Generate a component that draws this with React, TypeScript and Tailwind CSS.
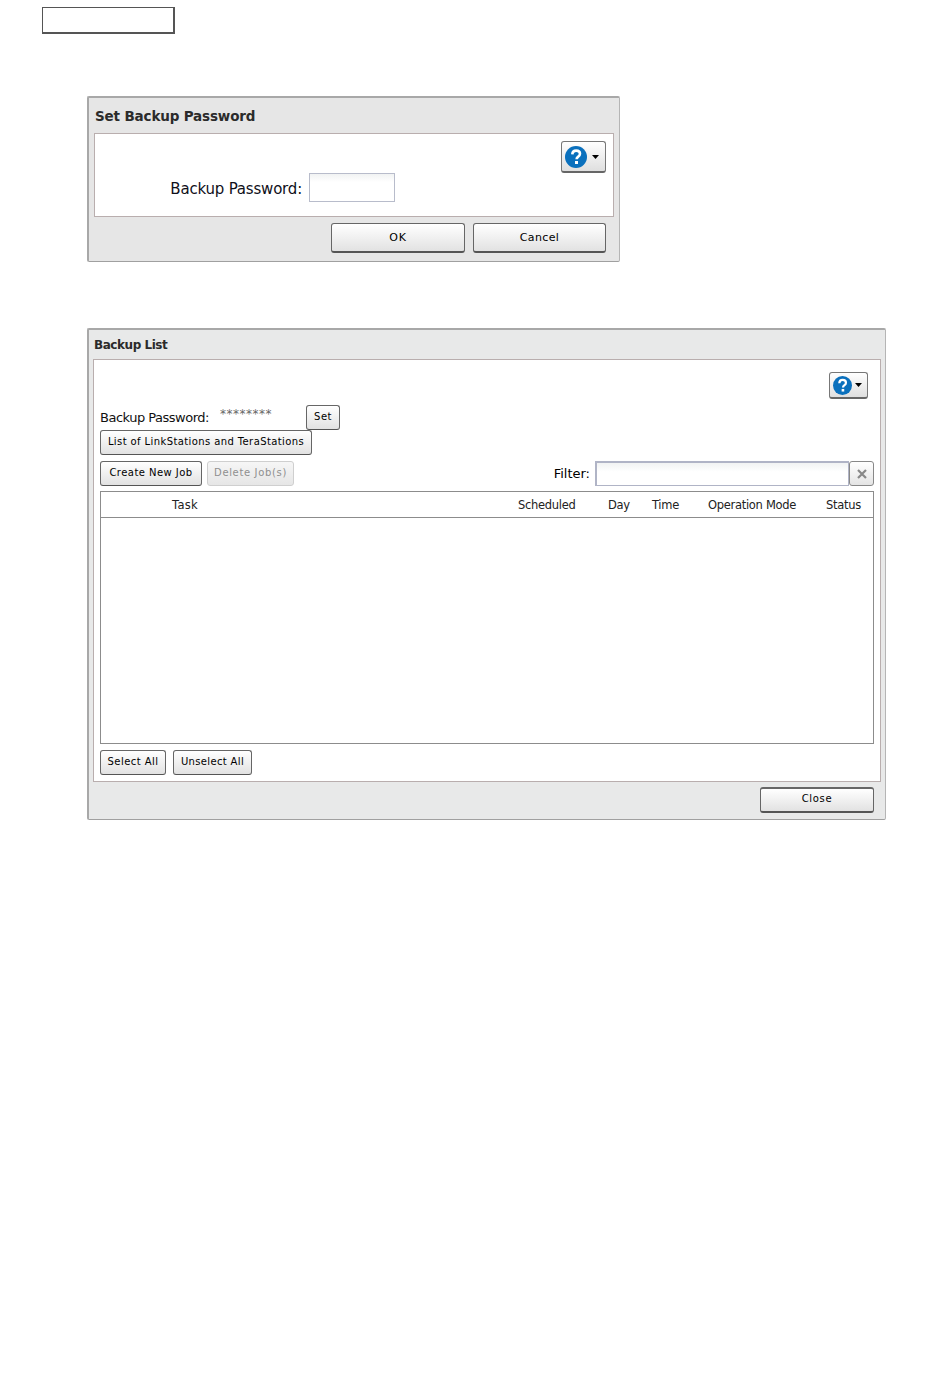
const font = "font-['DejaVu_Sans',sans-serif]";

function Btn({ label, className = '', disabled = false }: { label: string; className?: string; disabled?: boolean }) {
  const tone = disabled
    ? 'border-[#cfcfcf] bg-gradient-to-b from-[#f6f6f6] to-[#e6e6e6] text-[#8f8f8f]'
    : 'border-[#666] border-b-[#555] bg-gradient-to-b from-white to-[#e2e2e2] text-black';
  return (
    <button className={`flex items-center justify-center rounded-[3px] border text-[10px] ${tone} ${className}`}>
      {label}
    </button>
  );
}

function HelpButton({ className, size }: { className: string; size: number }) {
  return (
    <button className={`flex items-center justify-start rounded-[3px] border border-[#777] border-b-2 border-b-[#666] bg-gradient-to-b from-white to-[#dfdfdf] pl-[3px] ${className}`}>
      <svg width={size} height={size} viewBox="0 0 22 22">
        <circle cx="11" cy="11" r="11" fill="#0a70bd" />
        <path d="M7.3 8.4C7.4 6 9 4.6 11.2 4.6c2.2 0 3.8 1.3 3.8 3.2 0 1.5-.8 2.3-2 3.1-1 .7-1.4 1.2-1.4 2.4" fill="none" stroke="#fff" strokeWidth="2.6" />
        <rect x="10" y="15" width="3" height="3" fill="#fff" />
      </svg>
      <svg width="7" height="4" viewBox="0 0 7 4">
        <path d="M0 0h7L3.5 4z" fill="#000" />
      </svg>
    </button>
  );
}

function Panel({ title, className, titleClass, children }: { title: string; className: string; titleClass: string; children: React.ReactNode }) {
  return (
    <section className={`rounded-[2px] border-2 border-r border-b border-[#a8a8a8] border-r-[#b5b5b5] border-b-[#a0a0a0] ${className}`}>
      <h2 className={`font-bold text-[#2b2b2b] ${titleClass}`}>{title}</h2>
      {children}
    </section>
  );
}

export default function App() {
  return (
    <div className={`min-h-[1387px] bg-white pt-[7px] ${font}`}>
      <div className="ml-[42px] h-[27px] w-[133px] border border-[#555] border-b-2 border-r-2 bg-white" />

      {/* Set Backup Password */}
      <Panel title="Set Backup Password" className="ml-[87px] mt-[62px] h-[166px] w-[533px] bg-[#e6e6e6]" titleClass="h-[35px] pl-[6px] pt-[10px] text-[13.5px] leading-[17px] tracking-[-0.15px]">
        <div className="mx-[5px] h-[84px] border border-[#b9aeae] bg-white pt-[7px]">
          <div className="flex justify-end pr-[7px]">
            <HelpButton className="h-[32px] w-[45px] gap-[5px]" size={22} />
          </div>
          <div className="flex">
            <label className="flex h-[29px] w-[207px] items-center justify-end pt-[3px] text-[15px] tracking-[-0.2px] text-[#10101a]">Backup Password:</label>
            <div className="ml-[7px] h-[29px] w-[86px] border border-[#b8bccb] bg-gradient-to-b from-[#f1f3f3] to-white to-30%" />
          </div>
        </div>
        <div className="mt-[6px] flex justify-end gap-[8px] pr-[13px]">
          <Btn label="OK" className="h-[30px] w-[134px] border-b-2 pt-[1px] text-[11px] tracking-[0.7px]" />
          <Btn label="Cancel" className="h-[30px] w-[133px] border-b-2 pt-[2px] text-[11px] tracking-[0.4px]" />
        </div>
      </Panel>

      {/* Backup List */}
      <Panel title="Backup List" className="ml-[87px] mt-[66px] h-[492px] w-[799px] bg-[#e8e9e9]" titleClass="h-[29px] pl-[5px] pt-[7px] text-[12px] leading-[16px] tracking-[-0.45px]">
        <div className="ml-[4px] mr-[4px] h-[423px] border border-[#b9aeae] bg-white px-[6px] pt-[12px]">
          <div className="flex justify-end pr-[6px]">
            <HelpButton className="h-[27px] w-[39px] gap-[3px]" size={19} />
          </div>
          <div className="mt-[6px] flex h-[25px]">
            <span className="w-[120px] pt-[4px] text-[13px] leading-[17px] tracking-[-0.5px] text-[#111]">Backup Password:</span>
            <span className="w-[86px] pt-[2px] text-[12px] leading-[14px] tracking-[0.5px] text-[#666]">********</span>
            <Btn label="Set" className="h-[25px] w-[34px] pb-[2px] tracking-[0.5px]" />
          </div>
          <Btn label="List of LinkStations and TeraStations" className="h-[25px] w-[212px] pb-[2px] tracking-[0.4px]" />
          <div className="mt-[6px] flex h-[25px] items-stretch">
            <Btn label="Create New Job" className="w-[102px] pb-[2px] tracking-[0.45px]" />
            <Btn label="Delete Job(s)" className="ml-[5px] w-[87px] pb-[2px] tracking-[0.65px]" disabled />
            <label className="ml-auto flex items-center pr-[5px] text-[13px] text-black">Filter:</label>
            <div className="w-[254px] border border-[#b0b4c6] border-l-2 border-t-2 bg-gradient-to-b from-[#f1f3f3] to-white to-40%" />
            <button className="flex w-[25px] items-center justify-center rounded-[3px] border border-[#888] bg-gradient-to-b from-white to-[#e4e4e4]">
              <svg width="10" height="10" viewBox="0 0 10 10">
                <path d="M1 1l8 8M9 1l-8 8" stroke="#888" strokeWidth="2.2" />
              </svg>
            </button>
          </div>
          <div className="mt-[5px] h-[253px] border border-[#8c8c8c]">
            <div className="grid h-[26px] grid-cols-[71px_346px_90px_44px_56px_118px_1fr] items-center border-b border-[#8c8c8c] pt-[2px] text-[11.5px] tracking-[-0.3px] text-[#222]">
              <span />
              <span className="tracking-[0.3px]">Task</span>
              <span>Scheduled</span>
              <span>Day</span>
              <span>Time</span>
              <span>Operation Mode</span>
              <span>Status</span>
            </div>
          </div>
          <div className="mt-[6px] flex gap-[7px]">
            <Btn label="Select All" className="h-[25px] w-[66px] pb-[2px] tracking-[0.45px]" />
            <Btn label="Unselect All" className="h-[25px] w-[79px] pb-[2px] tracking-[0.35px]" />
          </div>
        </div>
        <div className="mt-[5px] flex justify-end pr-[11px]">
          <Btn label="Close" className="h-[26px] w-[114px] border-t-2 border-b-2 pb-[3px] tracking-[0.7px]" />
        </div>
      </Panel>
    </div>
  );
}
